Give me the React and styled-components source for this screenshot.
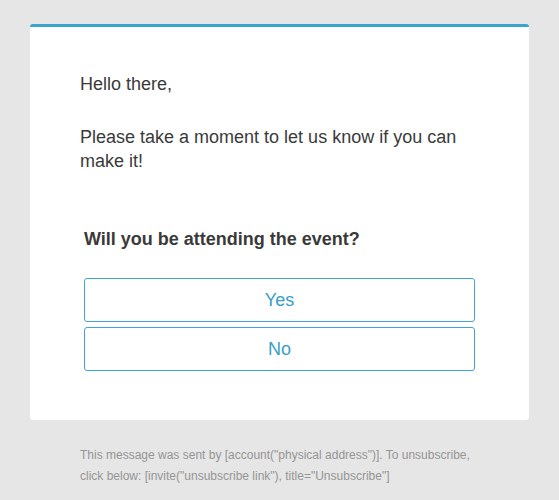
import React from 'react';
import styled, { createGlobalStyle } from 'styled-components';

const GlobalStyle = createGlobalStyle`
  html, body {
    margin: 0;
    padding: 0;
    background: #e6e6e6;
  }
  body {
    font-family: "Liberation Sans", Arial, sans-serif;
  }
`

const Page = styled.div`
  width: 559px;
  height: 500px;
  padding: 24px 30px 0 30px;
  box-sizing: border-box;
`

const Card = styled.div`
  background: #fff;
  border-top: 3px solid #39a6cf;
  border-radius: 3px;
  padding: 45px 50px 49px 50px;
  box-sizing: border-box;
  width: 499px;
`

const Text = styled.p`
  margin: 0 0 ${p => p.gap || 0}px 0;
  font-size: 18px;
  line-height: 24px;
  color: #3a3a3a;
`

const Question = styled.div`
  padding: 0 4px;
  margin-top: 54px;
`

const QuestionTitle = styled.p`
  margin: 0 0 27px 0;
  font-size: 18px;
  font-weight: bold;
  line-height: 24px;
  color: #3a3a3a;
`

const Buttons = styled.div`
  display: flex;
  flex-direction: column;
  gap: 5px;
`

const Button = styled.a`
  display: flex;
  align-items: center;
  justify-content: center;
  height: 44px;
  box-sizing: border-box;
  border: 1px solid #3ea7cf;
  border-radius: 3px;
  color: #3a9ec7;
  font-size: 18px;
  text-decoration: none;
`

const Footer = styled.div`
  padding: 25px 50px 0 50px;
  font-size: 12px;
  line-height: 21px;
  color: #959595;
`

function App() {
  return (
    <Page>
      <GlobalStyle />
      <Card>
        <Text gap={29}>Hello there,</Text>
        <Text>Please take a moment to let us know if you can make it!</Text>
        <Question>
          <QuestionTitle>Will you be attending the event?</QuestionTitle>
          <Buttons>
            <Button href="#">Yes</Button>
            <Button href="#">No</Button>
          </Buttons>
        </Question>
      </Card>
      <Footer>
        This message was sent by [account("physical address")]. To unsubscribe, click below: [invite("unsubscribe link"), title="Unsubscribe"]
      </Footer>
    </Page>
  );
}

export default App;
